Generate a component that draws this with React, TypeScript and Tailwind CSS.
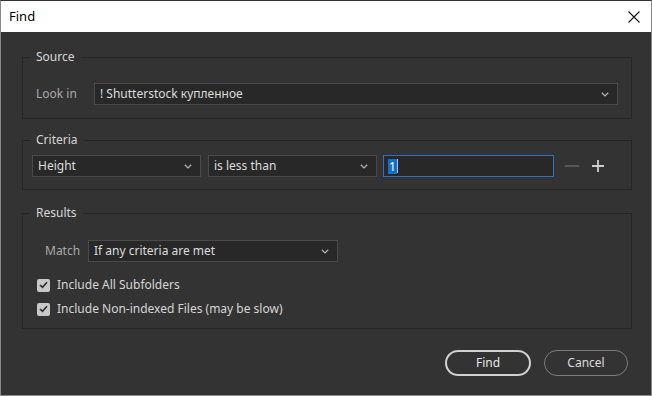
import React from "react";

const Chevron = () => (
  <svg width="8" height="5" viewBox="0 0 8 5" className="shrink-0">
    <path d="M0.8 0.8 L4 3.9 L7.2 0.8" fill="none" stroke="#b4b4b4" strokeWidth="1.3" />
  </svg>
);

function Select({ value, className }: { value: string; className: string }) {
  return (
    <div
      className={`flex h-[22px] items-center justify-between border border-[#4a4a4a] bg-[#282828] pl-[5px] pr-[8px] text-[#dcdcdc] ${className}`}
    >
      <span>{value}</span>
      <Chevron />
    </div>
  );
}

function Check({ label }: { label: string }) {
  return (
    <label className="flex h-[24px] items-center gap-[7px] text-[#d6d6d6]">
      <span className="flex h-[13px] w-[13px] items-center justify-center rounded-[2px] bg-[#c8c8c8]">
        <svg width="9" height="8" viewBox="0 0 9 8">
          <path d="M1 4 L3.5 6.3 L8 1.3" fill="none" stroke="#2b2b2b" strokeWidth="1.6" />
        </svg>
      </span>
      <span>{label}</span>
    </label>
  );
}

function Group({
  title,
  children,
  className,
  outer,
}: {
  title: string;
  children: React.ReactNode;
  className: string;
  outer: string;
}) {
  return (
    <fieldset className={`border border-[#262626] ${outer}`}>
      <legend className="ml-[7px] px-[6px] leading-[18px] text-[#d6d6d6]">{title}</legend>
      <div className={className}>{children}</div>
    </fieldset>
  );
}

export default function App() {
  return (
    <div
      className="flex h-[396px] w-[652px] flex-col border border-[#8a8a8a] border-t-[#333] bg-[#333333] text-[12px]"
      style={{ fontFamily: '"Noto Sans", "Open Sans", sans-serif' }}
    >
      <div className="flex h-[31px] shrink-0 items-center justify-between bg-white pl-[8px] pr-[10px] text-[13px] text-black">
        <span>Find</span>
        <svg width="14" height="14" viewBox="0 0 14 14">
          <path d="M1.5 1.5 L12.5 12.5 M12.5 1.5 L1.5 12.5" stroke="#111" strokeWidth="1.1" />
        </svg>
      </div>
      <div className="flex flex-1 flex-col pl-[21px] pr-[19px] pt-[16px]">
        <Group title="Source" outer="" className="pb-[13px] pl-[13px] pr-[13px] pt-[17px]">
          <div className="flex items-center">
            <span className="w-[58px] text-[#a8a8a8]">Look in</span>
            <Select value="! Shutterstock купленное" className="flex-1" />
          </div>
        </Group>
        <Group title="Criteria" outer="mt-[12px]" className="pb-[12px] pl-[9px] pr-[9px] pt-[6px]">
          <div className="flex items-center">
            <Select value="Height" className="w-[169px]" />
            <Select value="is less than" className="ml-[7px] w-[169px]" />
            <div className="ml-[6px] flex h-[22px] w-[171px] items-center border border-[#2f6fc0] bg-[#282828] pl-[4px]">
              <span className="bg-[#0f6fd0] px-[1px] leading-[15px] text-white">1</span>
              <span className="h-[14px] w-[1px] bg-[#c0c0c0]" />
            </div>
            <svg width="14" height="14" viewBox="0 0 14 14" className="ml-[11px]">
              <path d="M0 7 H14" stroke="#5c5c5c" strokeWidth="1.8" />
            </svg>
            <svg width="14" height="14" viewBox="0 0 14 14" className="ml-[12px]">
              <path d="M1 7 H13 M7 1 V13" stroke="#cfcfcf" strokeWidth="1.8" />
            </svg>
          </div>
        </Group>
        <Group title="Results" outer="mt-[14px]" className="pb-[7px] pl-[14px] pr-[13px] pt-[18px]">
          <div className="flex items-center pl-[8px]">
            <span className="w-[43px] text-[#a8a8a8]">Match</span>
            <Select value="If any criteria are met" className="w-[250px]" />
          </div>
          <div className="mt-[11px] flex flex-col">
            <Check label="Include All Subfolders" />
            <Check label="Include Non-indexed Files (may be slow)" />
          </div>
        </Group>
        <div className="mt-[21px] flex justify-end gap-[13px] pr-[4px]">
          <button className="h-[26px] w-[86px] rounded-full border-2 border-[#d2d2d2] text-[#e6e6e6]">Find</button>
          <button className="h-[26px] w-[84px] rounded-full border-[1.5px] border-[#7c7c7c] text-[#dcdcdc]">Cancel</button>
        </div>
      </div>
    </div>
  );
}
